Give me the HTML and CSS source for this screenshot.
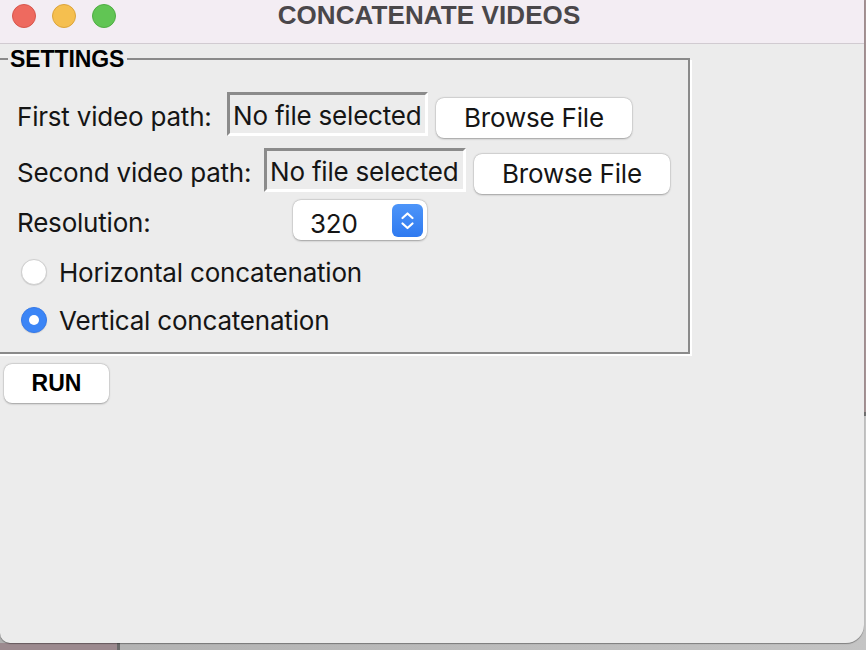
FILE: index.html
```html
<!DOCTYPE html>
<html lang="en">
<head>
<meta charset="utf-8">
<title>Concatenate Videos</title>
<link rel="stylesheet" href="styles.css">
</head>
<body>
<div class="window">
  <header class="titlebar">
    <div class="lights">
      <span class="light red"></span>
      <span class="light yellow"></span>
      <span class="light green"></span>
    </div>
    <h1 class="title">CONCATENATE VIDEOS</h1>
    <div class="spacer"></div>
  </header>
  <main class="content">
    <section class="settings">
      <div class="legend">SETTINGS</div>
      <div class="row row-first">
        <label class="lbl lbl-first">First video path:</label>
        <div class="entry entry-first">No file selected</div>
        <button class="btn btn-browse">Browse File</button>
      </div>
      <div class="row row-second">
        <label class="lbl lbl-second">Second video path:</label>
        <div class="entry entry-second">No file selected</div>
        <button class="btn btn-browse">Browse File</button>
      </div>
      <div class="row row-res">
        <label class="lbl lbl-res">Resolution:</label>
        <div class="combo">
          <span class="combo-value">320</span>
          <span class="stepper">
            <svg width="31" height="33" viewBox="0 0 31 33">
              <path d="M10.5 14 L15.5 9.5 L20.5 14" fill="none" stroke="#fff" stroke-width="2.2" stroke-linecap="round" stroke-linejoin="round"/>
              <path d="M10.5 19.5 L15.5 24 L20.5 19.5" fill="none" stroke="#fff" stroke-width="2.2" stroke-linecap="round" stroke-linejoin="round"/>
            </svg>
          </span>
        </div>
      </div>
      <div class="row radio-row radio-first">
        <span class="radio"></span>
        <span class="radio-text">Horizontal concatenation</span>
      </div>
      <div class="row radio-row radio-second">
        <span class="radio checked"></span>
        <span class="radio-text">Vertical concatenation</span>
      </div>
    </section>
    <button class="btn btn-run">RUN</button>
  </main>
</div>
</body>
</html>
```
FILE: styles.css
```css
html, body {
  margin: 0;
  padding: 0;
}
body {
  width: 866px;
  height: 650px;
  overflow: hidden;
  background:
    linear-gradient(#9c8a8f, #9c8a8f) 0 643px / 117px 7px no-repeat,
    linear-gradient(#6b6b6b, #6b6b6b) 117px 643px / 3px 7px no-repeat,
    linear-gradient(#a49294, #a49294) 864px 0 / 2px 412px no-repeat,
    linear-gradient(#727272, #727272) 864px 412px / 2px 4px no-repeat,
    linear-gradient(90deg, #b0b0b0, #c4c4c4);
  font-family: "Inter", "Liberation Sans", sans-serif;
  color: #151515;
}
.window {
  width: 864px;
  height: 643px;
  background: #ececec;
  border-radius: 0 0 18px 10px;
  overflow: hidden;
  box-shadow: 0 1px 1px rgba(0, 0, 0, 0.35);
}
.titlebar {
  height: 43px;
  border-bottom: 1px solid #d1cbd1;
  background: #f3edf3;
  display: grid;
  grid-template-columns: 1fr auto 1fr;
  align-items: start;
}
.lights {
  display: flex;
  gap: 16px;
  padding: 4px 0 0 12px;
}
.light {
  width: 24px;
  height: 24px;
  border-radius: 50%;
  box-sizing: border-box;
}
.red { background: #ee6a5f; border: 1px solid #d7564c; }
.yellow { background: #f5bf4f; border: 1px solid #dca43a; }
.green { background: #61c554; border: 1px solid #4fad43; }
.title {
  margin: 0;
  font-family: "Liberation Sans", Arial, sans-serif;
  font-weight: bold;
  font-size: 26px;
  line-height: 31px;
  color: #4a474a;
  letter-spacing: 0.1px;
  transform: translateX(-3px);
}
.content {
  display: flex;
  flex-direction: column;
  align-items: flex-start;
}
.settings {
  box-sizing: border-box;
  width: 694px;
  margin: 14px 0 0 -4px;
  border: 2px solid #8a8a8a;
  box-shadow: 2px 2px 0 #ffffff;
  padding: 0 0 12px 10px;
}
.legend {
  display: table;
  margin-top: -13px;
  padding: 0 3px 0 2px;
  background: #ececec;
  font-family: "Liberation Sans", Arial, sans-serif;
  font-weight: bold;
  font-size: 23px;
  line-height: 24px;
  letter-spacing: -0.1px;
  color: #000;
}
.row {
  display: flex;
  align-items: flex-start;
  margin-left: 9px;
  font-size: 26px;
  letter-spacing: -0.2px;
}
.row-first { margin-top: 21px; }
.row-second { margin-top: 10px; }
.row-res { margin-top: 6px; }
.lbl {
  flex: none;
  height: 46px;
  line-height: 42px;
  padding-top: 4px;
  box-sizing: border-box;
  white-space: nowrap;
}
.lbl-first { width: 210px; }
.lbl-second { width: 247px; }
.lbl-res { width: 276px; height: 40px; line-height: 34px; padding-top: 6px; }
.entry {
  box-sizing: border-box;
  height: 44px;
  border-style: solid;
  border-width: 3px;
  border-color: #8b8b8b #ffffff #ffffff #8b8b8b;
  background: #ececec;
  padding: 4px 0 0 3px;
  line-height: 34px;
  white-space: nowrap;
  overflow: hidden;
}
.entry-first { width: 201px; }
.entry-second { width: 202px; }
.btn {
  font-family: "Inter", "Liberation Sans", sans-serif;
  font-size: 26px;
  letter-spacing: -0.2px;
  color: #151515;
  background: #ffffff;
  border: none;
  border-radius: 8px;
  box-shadow: 0 0.5px 2px rgba(0, 0, 0, 0.3), 0 0 0 0.5px rgba(0, 0, 0, 0.08);
  padding: 0;
}
.btn-browse {
  width: 196px;
  height: 40px;
  margin: 6px 0 0 8px;
  line-height: 40px;
}
.combo {
  box-sizing: border-box;
  width: 134px;
  height: 40px;
  background: #ffffff;
  border-radius: 8px;
  box-shadow: 0 0.5px 2px rgba(0, 0, 0, 0.3), 0 0 0 0.5px rgba(0, 0, 0, 0.08);
  display: flex;
  align-items: flex-start;
  justify-content: space-between;
  padding: 4px 4px 0 17px;
}
.combo-value {
  line-height: 32px;
  padding-top: 4px;
}
.stepper {
  width: 31px;
  height: 33px;
  border-radius: 6px;
  background: linear-gradient(#4d95f9, #2f7af0);
  display: flex;
}
.radio-row {
  align-items: center;
  height: 40px;
}
.radio-first { margin-top: 12px; }
.radio-second { margin-top: 8px; }
.radio {
  box-sizing: border-box;
  width: 26px;
  height: 26px;
  margin-left: 4px;
  margin-right: 12px;
  border-radius: 50%;
  background: #ffffff;
  border: 1px solid #cfcfcf;
  box-shadow: 0 0.5px 1px rgba(0, 0, 0, 0.15);
  display: flex;
  align-items: center;
  justify-content: center;
}
.radio.checked {
  background: #3b85f6;
  border-color: #3479ea;
}
.radio.checked::after {
  content: "";
  width: 10px;
  height: 10px;
  border-radius: 50%;
  background: #ffffff;
}
.radio-text {
  line-height: 38px;
  padding-top: 2px;
  white-space: nowrap;
}
.btn-run {
  width: 105px;
  height: 39px;
  margin: 10px 0 0 4px;
  font-family: "Liberation Sans", Arial, sans-serif;
  font-weight: bold;
  font-size: 23px;
  letter-spacing: 0;
  line-height: 39px;
  color: #000;
}
```
